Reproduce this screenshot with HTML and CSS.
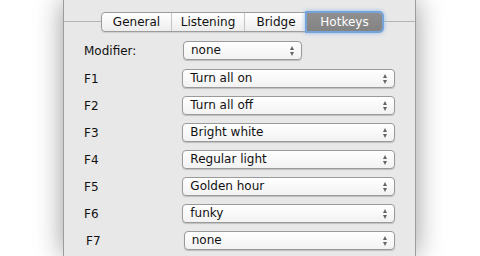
FILE: index.html
```html
<!DOCTYPE html>
<html lang="en">
<head>
    <meta charset="UTF-8">
    <title>Hotkeys</title>
    <link rel="stylesheet" href="styles.css">
</head>
<body>

    <div class="window">
        <div class="tabbar">
            <div class="segments">
                <div class="seg">General</div>
                <div class="seg">Listening</div>
                <div class="seg">Bridge</div>
                <div class="seg selected">Hotkeys</div>
            </div>
        </div>

        <div class="panel">
            <div class="row modifier">
                <span class="label">Modifier:</span>
                <div class="popup short">none<span class="arrows"></span></div>
            </div>
            <div class="row">
                <span class="label">F1</span>
                <div class="popup">Turn all on<span class="arrows"></span></div>
            </div>
            <div class="row">
                <span class="label">F2</span>
                <div class="popup">Turn all off<span class="arrows"></span></div>
            </div>
            <div class="row">
                <span class="label">F3</span>
                <div class="popup">Bright white<span class="arrows"></span></div>
            </div>
            <div class="row">
                <span class="label">F4</span>
                <div class="popup">Regular light<span class="arrows"></span></div>
            </div>
            <div class="row">
                <span class="label">F5</span>
                <div class="popup">Golden hour<span class="arrows"></span></div>
            </div>
            <div class="row">
                <span class="label">F6</span>
                <div class="popup">funky<span class="arrows"></span></div>
            </div>
            <div class="row shifted">
                <span class="label">F7</span>
                <div class="popup">none<span class="arrows"></span></div>
            </div>
        </div>
    </div>

</body>
</html>
```

FILE: styles.css
```css
body {
    font-family: 'DejaVu Sans', sans-serif;
    font-size: 12px;
    background-color: #ffffff;
    margin: 0;
    padding: 0;
    color: #111111;
    overflow: hidden;
}

/* Window */
.window {
    width: 351px;
    height: 256px;
    margin-left: 63px;
    background-color: #e8e8e8;
    border-left: 1px solid #9c9c9c;
    border-right: 1px solid #9c9c9c;
    box-shadow: 0 0 26px rgba(0, 0, 0, 0.4);
}

/* Tab bar */
.tabbar {
    position: relative;
    height: 21px;
    border-bottom: 1px solid #b4b4b4;
}

.segments {
    position: absolute;
    top: 12px;
    left: 37px;
    display: flex;
    height: 18px;
    border: 1px solid #9c9c9c;
    border-radius: 4px;
    background: linear-gradient(#ffffff, #ededed);
    box-shadow: 0 1px 1px rgba(0, 0, 0, 0.12);
}

.seg {
    display: flex;
    align-items: center;
    justify-content: center;
    border-left: 1px solid #c4c4c4;
    line-height: 18px;
}

.seg:nth-child(1) { width: 69px; border-left: none; }
.seg:nth-child(2) { width: 72px; }
.seg:nth-child(3) { width: 62px; }
.seg:nth-child(4) { width: 75px; }

.seg.selected {
    background: linear-gradient(#8f8f8f, #838383);
    color: #ffffff;
    border-left: none;
    border-radius: 0 3px 3px 0;
    box-shadow: 0 0 0 2px #74a4da, 0 0 4px 2px #8fb8e6;
}

/* Panel with rows */
.panel {
    padding: 19px 20px 0 20px;
    display: flex;
    flex-direction: column;
    gap: 8px;
}

.row {
    display: flex;
    align-items: center;
    height: 19px;
}

.row.modifier {
    margin-bottom: 1px;
}

.row.shifted {
    padding-left: 2px;
}

.label {
    width: 99px;
}

/* Popup buttons */
.popup {
    position: relative;
    width: 205px;
    height: 17px;
    line-height: 17px;
    padding-left: 7px;
    border: 1px solid #9a9a9a;
    border-radius: 4px;
    background: linear-gradient(#ffffff, #f2f2f2);
    box-shadow: 0 1px 1px rgba(0, 0, 0, 0.18);
}

.popup.short {
    width: 110px;
}

.popup .arrows {
    position: absolute;
    right: 6px;
    top: 4px;
    width: 5px;
    height: 10px;
}

.popup .arrows::before,
.popup .arrows::after {
    content: "";
    position: absolute;
    left: 0;
    border-left: 2.5px solid transparent;
    border-right: 2.5px solid transparent;
}

.popup .arrows::before {
    top: 0;
    border-bottom: 4px solid #666666;
}

.popup .arrows::after {
    bottom: 0;
    border-top: 4px solid #666666;
}
```
